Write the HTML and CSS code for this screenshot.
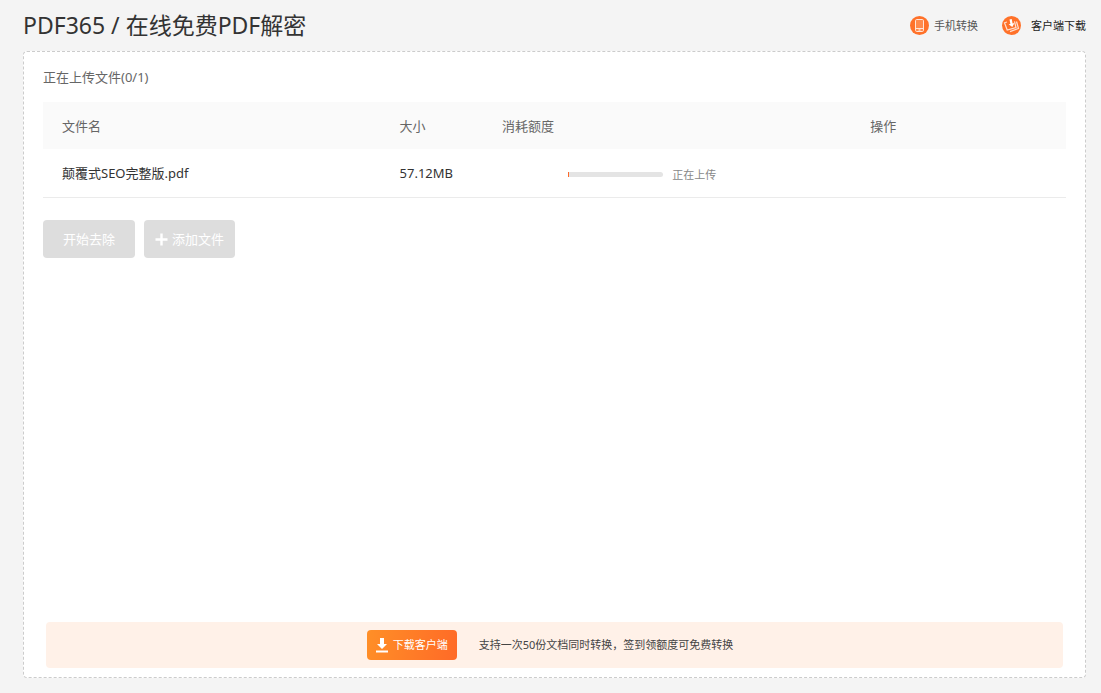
FILE: index.html
```html
<!DOCTYPE html>
<html lang="zh-CN">
<head>
<meta charset="utf-8">
<meta name="viewport" content="width=device-width, initial-scale=1">
<title>PDF365 / 在线免费PDF解密</title>
<link rel="stylesheet" href="styles.css">
</head>
<body class="page">
<header class="topbar">
  <h1 class="topbar-title">PDF365 / 在线免费PDF解密</h1>
  <nav class="topbar-links">
    <a class="top-link" href="#mobile">
      <svg class="top-icon" viewBox="0 0 19 19" aria-hidden="true">
        <circle cx="9.500" cy="9.500" r="9.500" fill="#ff7129"/>
        <rect x="5.500" y="3.500" width="8" height="12" rx="1.200" fill="#ff8a4c" stroke="#ffe5d8" stroke-width="1"/>
        <path d="M5.500 12.500h8" stroke="#ffe5d8" stroke-width="1"/>
        <path d="M8.500 14h2" stroke="#fff" stroke-width="1"/>
      </svg>
      <span>手机转换</span>
    </a>
    <a class="top-link top-link-dark" href="#client">
      <svg class="top-icon" viewBox="0 0 19 19" aria-hidden="true">
        <circle cx="9.500" cy="9.500" r="9.500" fill="#ff7129"/>
        <path d="M5 6L2.500 6.800L5.200 14L14 11.500L12.500 5.300" fill="none" stroke="#ffe0d0" stroke-width="1.200"/>
        <path d="M14.500 5.500L16.500 12.500L8 15.600" fill="none" stroke="#ffe0d0" stroke-width="1.200"/>
        <path d="M7.500 3.500l2.200-.5.900 4.500 1.900-.4-2.200 4-3.700-2.800 1.800-.4z" fill="#fff"/>
      </svg>
      <span>客户端下载</span>
    </a>
  </nav>
</header>
<main class="panel">
  <h2 class="upload-status">正在上传文件(0/1)</h2>
  <table class="files">
    <colgroup>
      <col class="col-name"><col class="col-size"><col class="col-cost"><col class="col-progress"><col>
    </colgroup>
    <thead>
      <tr><th scope="col">文件名</th><th scope="col">大小</th><th scope="col" colspan="2">消耗额度</th><th scope="col">操作</th></tr>
    </thead>
    <tbody>
      <tr>
        <td>颠覆式SEO完整版.pdf</td>
        <td>57.12MB</td>
        <td></td>
        <td>
          <div class="upload">
            <div class="track" role="progressbar" aria-label="正在上传" aria-valuemin="0" aria-valuemax="100" aria-valuenow="1"><div class="track-fill" style="width:1%"></div></div>
            <span>正在上传</span>
          </div>
        </td>
        <td></td>
      </tr>
    </tbody>
  </table>
  <div class="actions">
    <button class="action action-start" type="button" disabled>开始去除</button>
    <button class="action action-add" type="button" disabled>
      <svg class="plus" viewBox="0 0 13 13" aria-hidden="true"><path d="M6.500 0.500v12M0.500 6.500h12" stroke="#fff" stroke-width="2.400"/></svg>
      <span>添加文件</span>
    </button>
  </div>
  <aside class="promo">
    <a class="promo-button" href="#client">
      <svg class="promo-icon" viewBox="0 0 12 16" aria-hidden="true"><path d="M4 1h4v6h3l-5 5-5-5h3zM0 13.500h12v2H0z" fill="#fff"/></svg>
      <span>下载客户端</span>
    </a>
    <p class="promo-text">支持一次50份文档同时转换，签到领额度可免费转换</p>
  </aside>
</main>
</body>
</html>
```
FILE: styles.css
```css
* {
  box-sizing: border-box;
}

.page {
  display: flex;
  flex-direction: column;
  min-height: 100vh;
  margin: 0;
  padding: 0 15px 15px 23px;
  background: #f4f4f4;
  color: #333;
  font: 13px/20px "Noto Sans", "Noto Sans CJK SC", sans-serif;
}

.topbar {
  display: flex;
  align-items: center;
  justify-content: space-between;
  height: 51px;
}

.topbar-title {
  margin: 0;
  padding-bottom: 2px;
  font-size: 23px;
  line-height: 32px;
  font-weight: 400;
}

.topbar-links {
  display: flex;
  gap: 24px;
}

.top-link {
  display: flex;
  align-items: center;
  gap: 5px;
  color: #555;
  font-size: 11px;
  text-decoration: none;
}

.top-link-dark {
  gap: 10px;
  color: #222;
}

.top-icon {
  width: 19px;
  height: 19px;
}

.panel {
  display: flex;
  flex: 1;
  flex-direction: column;
  padding: 15px 19px 9px;
  border: 1px dashed #ccc;
  border-radius: 4px;
  background: #fff;
}

.upload-status {
  margin: 0 0 15px;
  color: #666;
  font-size: 13px;
  font-weight: 400;
}

.files {
  width: 100%;
  border-collapse: separate;
  border-spacing: 0;
  table-layout: fixed;
}

.col-name { width: 33%; }
.col-size { width: 10%; }
.col-cost { width: 6%; }
.col-progress { width: 30%; }

.files th {
  height: 47px;
  padding: 0 19px;
  background: #fafafa;
  color: #666;
  font-weight: 400;
  text-align: left;
}

.files td {
  height: 49px;
  padding: 0 19px;
  border-bottom: 1px solid #ebebeb;
  white-space: nowrap;
}

.upload {
  display: flex;
  align-items: center;
  gap: 9px;
  padding: 3px 0 0 5px;
  color: #888;
  font-size: 11px;
}

.track {
  width: 95px;
  height: 5px;
  overflow: hidden;
  border-radius: 0 3px 3px 0;
  background: #e4e4e4;
}

.track-fill {
  min-width: 1px;
  height: 100%;
  background: #ff6a2b;
}

.actions {
  display: flex;
  gap: 9px;
  margin: 22px 0;
}

.action {
  display: flex;
  align-items: center;
  justify-content: center;
  gap: 4px;
  height: 38px;
  padding: 0 11px;
  border: 0;
  border-radius: 4px;
  background: #ddd;
  color: #fff;
  font: inherit;
}

.action-start {
  padding: 0 20px;
}

.plus {
  width: 13px;
  height: 13px;
}

.promo {
  display: flex;
  align-items: center;
  justify-content: center;
  gap: 22px;
  height: 46px;
  margin: auto 3px 0;
  padding-right: 9px;
  border-radius: 4px;
  background: #fff1e8;
}

.promo-button {
  display: flex;
  align-items: center;
  gap: 5px;
  height: 30px;
  padding: 0 9px;
  border-radius: 4px;
  background: linear-gradient(100deg, #ff8f27, #ff6a27);
  color: #fff;
  font-size: 11px;
  text-decoration: none;
}

.promo-icon {
  width: 12px;
  height: 16px;
}

.promo-text {
  margin: 0;
  color: #444;
  font-size: 11px;
}
```
